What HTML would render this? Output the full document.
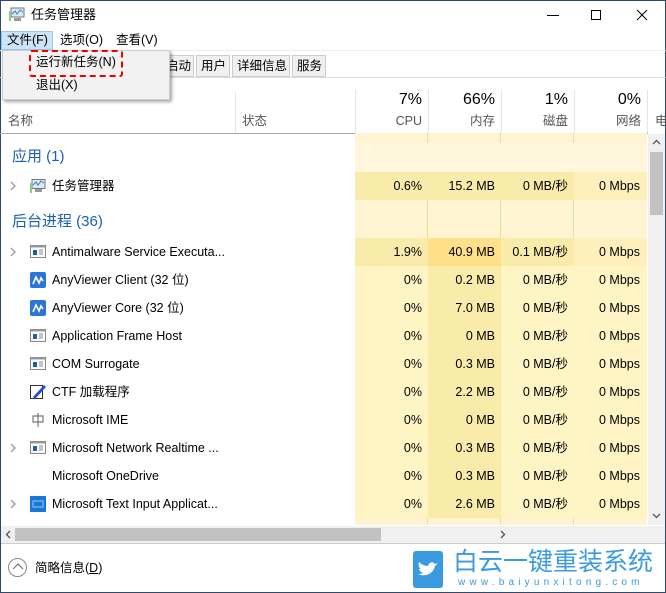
<!DOCTYPE html>
<html><head><meta charset="utf-8"><style>
*{margin:0;padding:0;box-sizing:border-box}
body{width:666px;height:593px;overflow:hidden;background:#fff;font-family:"Liberation Sans","Noto Sans CJK SC",sans-serif;font-size:12.5px;line-height:16px;color:#000;position:relative}
.a{position:absolute;white-space:nowrap}
.win{position:absolute;left:0;top:0;width:666px;height:593px;border:1px solid #2b4a6e}
.r{text-align:right}
.g{color:#555}
.col{position:absolute;top:133px;height:392px}
.sec{color:#1c5fb0;font-size:15px;line-height:18px}
</style></head><body>
<div class="win"></div>
<!-- title -->
<svg class="a" style="left:9px;top:7px" width="16" height="15"><rect x="2" y="1" width="13" height="9" fill="#dde8f0" stroke="#777"/><polyline points="3,7 6,4 8,7 11,3 14,5" fill="none" stroke="#2a7bd6"/><rect x="5" y="11" width="7" height="3" fill="#999"/><rect x="0" y="4" width="2" height="10" fill="#8c8"/></svg>
<div class="a" style="left:31px;top:7px;font-size:13px">任务管理器</div>
<div class="a" style="left:547px;top:15px;width:12px;height:1px;background:#000"></div>
<div class="a" style="left:591px;top:10px;width:10px;height:10px;border:1px solid #000"></div>
<svg class="a" style="left:636px;top:9px" width="12" height="12"><path d="M1 1L11 11M11 1L1 11" stroke="#000" stroke-width="1"/></svg>
<!-- menu -->
<div class="a" style="left:1px;top:31px;width:52px;height:19px;background:#cce4f7;border:1px solid #99c9ef"></div>
<div class="a" style="left:7px;top:32px">文件(F)</div>
<div class="a" style="left:60px;top:32px">选项(O)</div>
<div class="a" style="left:116px;top:32px">查看(V)</div>
<div class="a" style="left:0;top:50px;width:666px;height:1px;background:#eee"></div>
<!-- tabs -->
<div class="a" style="left:160px;top:55px;width:34px;height:22px;border:1px solid #ccc;background:#f0f0f0"></div>
<div class="a" style="left:166px;top:58px">启动</div>
<div class="a" style="left:196px;top:55px;width:34px;height:22px;border:1px solid #ccc;background:#f0f0f0"></div>
<div class="a" style="left:201px;top:58px">用户</div>
<div class="a" style="left:232px;top:55px;width:58px;height:22px;border:1px solid #ccc;background:#f0f0f0"></div>
<div class="a" style="left:237px;top:58px">详细信息</div>
<div class="a" style="left:292px;top:55px;width:34px;height:22px;border:1px solid #ccc;background:#f0f0f0"></div>
<div class="a" style="left:297px;top:58px">服务</div>
<div class="a" style="left:0;top:77px;width:666px;height:1px;background:#ddd"></div>
<!-- dropdown -->
<div class="a" style="left:2px;top:50px;width:168px;height:50px;background:#f2f2f2;border:1px solid #ccc;box-shadow:2px 2px 3px rgba(0,0,0,.35)"></div>
<div class="a" style="left:29px;top:50px;width:94px;height:27px;border:2px dashed #e00;border-radius:3px"></div>
<div class="a" style="left:36px;top:54px">运行新任务(N)</div>
<div class="a" style="left:36px;top:77px">退出(X)</div>
<!-- header -->
<div class="a" style="left:235px;top:92px;width:1px;height:41px;background:#e5e5e5"></div>
<div class="a" style="left:355px;top:90px;width:1px;height:43px;background:#e5e5e5"></div>
<div class="a" style="left:428px;top:90px;width:1px;height:43px;background:#e5e5e5"></div>
<div class="a" style="left:501px;top:90px;width:1px;height:43px;background:#e5e5e5"></div>
<div class="a" style="left:574px;top:90px;width:1px;height:43px;background:#e5e5e5"></div>
<div class="a" style="left:647px;top:90px;width:1px;height:43px;background:#e5e5e5"></div>
<div class="a g" style="left:8px;top:113px">名称</div>
<div class="a g" style="left:242px;top:113px">状态</div>
<div class="a r" style="left:355px;width:67px;top:91px;font-size:16px;line-height:18px">7%</div>
<div class="a r g" style="left:355px;width:67px;top:113px">CPU</div>
<div class="a r" style="left:428px;width:67px;top:91px;font-size:16px;line-height:18px">66%</div>
<div class="a r g" style="left:428px;width:67px;top:113px">内存</div>
<div class="a r" style="left:501px;width:67px;top:91px;font-size:16px;line-height:18px">1%</div>
<div class="a r g" style="left:501px;width:67px;top:113px">磁盘</div>
<div class="a r" style="left:574px;width:67px;top:91px;font-size:16px;line-height:18px">0%</div>
<div class="a r g" style="left:574px;width:67px;top:113px">网络</div>
<div class="a g" style="left:655px;top:113px">电</div>
<div class="a" style="left:0;top:133px;width:648px;height:1px;background:#aaa"></div>
<!-- columns -->
<div class="col" style="left:355px;width:73px;background:#fff4d2;border-right:1px solid #efdba8"></div>
<div class="col" style="left:428px;width:73px;background:#fff4d2;border-right:1px solid #efdba8"></div>
<div class="col" style="left:501px;width:73px;background:#fff4d2;border-right:1px solid #efdba8"></div>
<div class="col" style="left:574px;width:73px;background:#fff4d2"></div>
<div id="rows"></div>
<div class="a sec" style="left:12px;top:148px">应用 (1)</div>
<div class="a sec" style="left:12px;top:213px">后台进程 (36)</div>
<!-- vertical scrollbar -->
<div class="a" style="left:648px;top:134px;width:17px;height:391px;background:#f0f0f0"></div>
<div class="a" style="left:650px;top:152px;width:13px;height:63px;background:#c2c2c2"></div>
<svg class="a" style="left:652px;top:139px" width="9" height="6"><path d="M1 5L4.5 1.5L8 5" fill="none" stroke="#555" stroke-width="1.3"/></svg>
<svg class="a" style="left:652px;top:513px" width="9" height="6"><path d="M1 1L4.5 4.5L8 1" fill="none" stroke="#555" stroke-width="1.3"/></svg>
<!-- horizontal scrollbar -->
<div class="a" style="left:1px;top:526px;width:664px;height:17px;background:#f0f0f0"></div>
<div class="a" style="left:15px;top:528px;width:366px;height:13px;background:#c2c2c2"></div>
<svg class="a" style="left:5px;top:530px" width="6" height="9"><path d="M5 1L1.5 4.5L5 8" fill="none" stroke="#555" stroke-width="1.3"/></svg>
<svg class="a" style="left:500px;top:530px" width="6" height="9"><path d="M1 1L4.5 4.5L1 8" fill="none" stroke="#555" stroke-width="1.3"/></svg>
<div class="a" style="left:1px;top:543px;width:664px;height:1px;background:#ccc"></div>
<!-- footer -->
<div class="a" style="left:8px;top:558px;width:19px;height:19px;border:1px solid #888;border-radius:50%"></div>
<svg class="a" style="left:12px;top:562px" width="12" height="10"><path d="M1 7L6 2L11 7" fill="none" stroke="#666"/></svg>
<div class="a" style="left:35px;top:560px">简略信息(<u>D</u>)</div>
<!-- watermark -->
<div class="a" style="left:413px;top:551px;width:30px;height:37px;background:#3a9be0;border-radius:3px"></div>
<svg class="a" style="left:416px;top:560px" width="24" height="20"><path d="M2 14C8 17 17 15 19 6L22 3L19 4C17 1 13 2 12 6C8 6 5 4 3 2C2 5 3 8 5 9C4 9 3 9 3 8C3 11 5 12 7 13C5 14 3 14 2 14Z" fill="#fff"/></svg>
<div class="a" style="left:453px;top:548px;font-size:25px;line-height:28px;color:#3a9be0">白云一键重装系统</div>
<div class="a" style="left:458px;top:577px;font-size:10px;line-height:12px;color:#3a9be0;letter-spacing:4.2px">www.baiyunxitong.com</div>
<script>
var d=[["任务管理器","0.6%","15.2 MB","0 MB/秒","0 Mbps",186,1,1,"tm"],
["Antimalware Service Executa...","1.9%","40.9 MB","0.1 MB/秒","0 Mbps",252,1,1,"w"],
["AnyViewer Client (32 位)","0%","0.2 MB","0 MB/秒","0 Mbps",280,0,0,"av"],
["AnyViewer Core (32 位)","0%","7.0 MB","0 MB/秒","0 Mbps",308,0,0,"av"],
["Application Frame Host","0%","0 MB","0 MB/秒","0 Mbps",336,0,0,"w"],
["COM Surrogate","0%","0.3 MB","0 MB/秒","0 Mbps",364,0,0,"w"],
["CTF 加载程序","0%","2.2 MB","0 MB/秒","0 Mbps",392,0,0,"ctf"],
["Microsoft IME","0%","0 MB","0 MB/秒","0 Mbps",420,0,0,"ime"],
["Microsoft Network Realtime ...","0%","0.3 MB","0 MB/秒","0 Mbps",448,1,0,"w"],
["Microsoft OneDrive","0%","0.3 MB","0 MB/秒","0 Mbps",476,0,0,""],
["Microsoft Text Input Applicat...","0%","2.6 MB","0 MB/秒","0 Mbps",504,1,0,"ti"]];
var h='<div class="a" style="left:355px;top:143px;width:292px;height:29px;background:#fff6dc"></div>';
d.forEach(function(r){var y=r[5]-14;
var hi=r[7];
h+='<div class="a" style="left:355px;top:'+y+'px;width:73px;height:28px;background:'+(hi?'#f9eba9':'#fff4c4')+'"></div>';
h+='<div class="a" style="left:428px;top:'+y+'px;width:73px;height:28px;background:'+(hi?(r[2]=="40.9 MB"?'#ffe08a':'#f9eba9'):'#f9eba9')+'"></div>';
h+='<div class="a" style="left:501px;top:'+y+'px;width:73px;height:28px;background:'+(hi?'#f9eba9':'#fff4c4')+'"></div>';
h+='<div class="a" style="left:574px;top:'+y+'px;width:73px;height:28px;background:'+(hi?'#fff0bb':'#fff4c4')+'"></div>';
if(r[6])h+='<svg class="a" style="left:9px;top:'+(y+9)+'px" width="8" height="10"><path d="M2 1L6 5L2 9" fill="none" stroke="#999" stroke-width="1.3"/></svg>';
var ic="";
if(r[8]=="w")ic='<rect x="0.5" y="1.5" width="15" height="12" fill="#fff" stroke="#888"/><rect x="0.5" y="1.5" width="15" height="2" fill="#999"/><rect x="3" y="6" width="4" height="5" fill="#1c5fb0"/><path d="M9 6h4M9 8h4M9 10h4" stroke="#888"/>';
if(r[8]=="av")ic='<rect x="0" y="0" width="16" height="16" rx="2" fill="#2a76d8"/><path d="M3 12L6 5L9 11L11 6L13 9" fill="none" stroke="#fff" stroke-width="1.6"/>';
if(r[8]=="tm")ic='<rect x="2" y="1.5" width="13" height="9" fill="#dde8f0" stroke="#777"/><polyline points="3,7 6,4 8,7 11,3 14,5" fill="none" stroke="#2a7bd6"/><rect x="5" y="11" width="7" height="3" fill="#999"/><rect x="0" y="5" width="2" height="10" fill="#8c8"/>';
if(r[8]=="ctf")ic='<rect x="0.5" y="1.5" width="12" height="13" fill="#fff" stroke="#333"/><path d="M3 13L14 1L16 3L5 15Z" fill="#2a4ad8"/>';
if(r[8]=="ime")ic='<path d="M3 4h10v6H3zM8 1v14" fill="none" stroke="#777" stroke-width="1.2"/>';
if(r[8]=="ti")ic='<rect x="0" y="0" width="16" height="16" fill="#1a78d4"/><rect x="3" y="5" width="10" height="6" fill="none" stroke="#9cc8f0"/>';
if(ic)h+='<svg class="a" style="left:30px;top:'+(y+6)+'px" width="16" height="16">'+ic+'</svg>';
h+='<div class="a" style="left:52px;top:'+(y+6)+'px">'+r[0]+'</div>';
for(var i=0;i<4;i++)h+='<div class="a r" style="left:'+(355+73*i)+'px;width:'+(i==3?66:67)+'px;top:'+(y+6)+'px">'+r[i+1]+'</div>';
});
document.getElementById("rows").innerHTML=h;
</script>
</body></html>
